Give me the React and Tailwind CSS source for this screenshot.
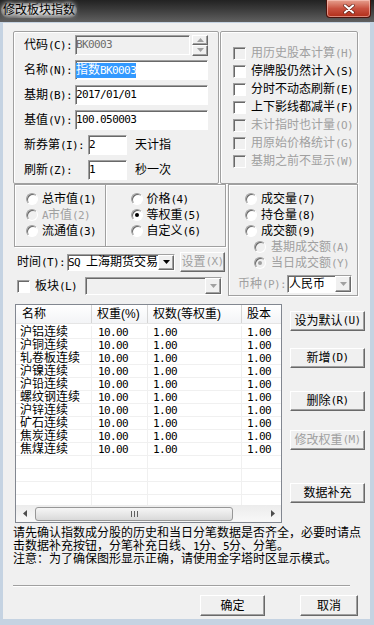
import React from 'react'

const sunken = 'border border-t-[#a0a0a0] border-l-[#a0a0a0] border-b-white border-r-white shadow-[inset_1px_1px_0_#696969]'
const raised = 'border border-t-white border-l-white border-b-[#696969] border-r-[#696969] shadow-[inset_-1px_-1px_0_#a0a0a0] bg-[#f0f0f0]'
const etched = 'border border-[#a0a0a0] shadow-[inset_1px_1px_0_#fff,1px_1px_0_#fff]'
const mono = "[font-family:'DejaVu_Sans_Mono',monospace] text-[11px] tracking-[-0.6px]"
const grey = 'text-[#a0a0a0]'

const rows = ['沪铝连续', '沪铜连续', '轧卷板连续', '沪镍连续', '沪铅连续', '螺纹钢连续', '沪锌连续', '矿石连续', '焦炭连续', '焦煤连续']

// ascii runs get the narrow fixed-width face, like the old dialog font
function T({ s }) {
  const parts = s.split(/([\x20-\x7e]+)/).filter(Boolean)
  return parts.map((p, i) =>
    /^[\x20-\x7e]+$/.test(p) ? <span key={i} className={`${mono} whitespace-pre`}>{p}</span> : <span key={i}>{p}</span>
  )
}

function Check({ label, disabled }) {
  return (
    <div className="flex items-center h-[18px]">
      <span className={`w-[13px] h-[13px] shrink-0 ${sunken} ${disabled ? 'bg-[#f0f0f0]' : 'bg-white'}`} />
      <span className={`ml-[5px] whitespace-nowrap ${disabled ? grey : ''}`}><T s={label} /></span>
    </div>
  )
}

function Radio({ label, checked, disabled, gap = 'ml-[4px]' }) {
  return (
    <div className="flex items-center h-[16px]">
      <span className={`flex items-center justify-center w-[12px] h-[12px] shrink-0 rounded-full ${sunken} ${disabled ? 'bg-[#f0f0f0]' : 'bg-white'}`}>
        {checked && <span className={`w-[4px] h-[4px] rounded-full ${disabled ? 'bg-[#a0a0a0]' : 'bg-black'}`} />}
      </span>
      <span className={`${gap} whitespace-nowrap ${disabled ? grey : ''}`}><T s={label} /></span>
    </div>
  )
}

function Arrow({ color = '#000', down = true }) {
  return (
    <svg width="7" height="4" viewBox="0 0 7 4">
      <path d={down ? 'M0 0H7L3.5 4Z' : 'M0 4H7L3.5 0Z'} fill={color} />
    </svg>
  )
}

function Btn({ label, className = '', disabled }) {
  return (
    <div className={`h-[20px] flex items-center justify-center whitespace-nowrap ${raised} ${disabled ? grey : ''} ${className}`}>
      <T s={label} />
    </div>
  )
}

function Field({ label, labelW = 'w-[51px]', children, className = '' }) {
  return (
    <div className="flex items-center h-[20px]">
      <span className={`${labelW} shrink-0 whitespace-nowrap`}><T s={label} /></span>
      <div className={`h-[20px] flex items-center ${sunken} ${className}`}>{children}</div>
    </div>
  )
}

export default function App() {
  return (
    <div className="w-[374px] h-[625px] flex flex-col overflow-hidden text-[12px] leading-[14px] text-black bg-[#3a3a3a] [font-family:'Liberation_Sans','Noto_Sans_CJK_SC',sans-serif]">
      <div className="h-[22px] shrink-0 flex items-start justify-between bg-linear-to-b from-[#222] to-[#606060]">
        <div className="mt-[3px] ml-[1px] px-[2px] h-[15px] leading-[15px] rounded-full bg-[radial-gradient(ellipse_at_center,rgba(235,235,235,0.85),rgba(200,200,200,0.35)_70%,rgba(0,0,0,0))] [text-shadow:0_0_4px_#fff,0_0_6px_#fff]">
          修改板块指数
        </div>
        <div className="mr-[3px] w-[45px] h-[18px] rounded-b-[4px] border border-t-0 border-[#4a120b] bg-linear-to-b from-[#e6a08f] via-[#c95240] to-[#b02c17] shadow-[inset_0_0_0_1px_rgba(255,210,200,0.55)] flex items-center justify-center">
          <svg width="12" height="10" viewBox="0 0 12 10">
            <path d="M2 1.5L10 8.5M10 1.5L2 8.5" stroke="#5a1a10" strokeWidth="3.4" strokeLinecap="round" />
            <path d="M2 1.5L10 8.5M10 1.5L2 8.5" stroke="#fff" strokeWidth="2.2" strokeLinecap="round" />
          </svg>
        </div>
      </div>

      <div className="flex-1 flex flex-col bg-[#c5d3e2] pt-[1px] pl-[3px] pr-[4px] pb-[6px]">
        <div className="flex-1 flex flex-col bg-[#f0f0f0]">
          {/* top groups */}
          <div className="mt-[8px] flex h-[153px] shrink-0">
            <div className={`ml-[10px] w-[206px] h-full rounded-[2px] ${etched} flex flex-col gap-[5px] pt-[3px] pl-[10px]`}>
              <div className="flex items-center h-[20px]">
                <span className="w-[51px] shrink-0 whitespace-nowrap"><T s="代码(C):" /></span>
                <div className={`w-[115px] h-[20px] flex items-center bg-[#f0f0f0] text-[#6d6d6d] ${sunken}`}>
                  <span className={mono}>BK0003</span>
                </div>
                <div className="ml-[2px] w-[16px] h-[21px] flex flex-col">
                  <div className={`flex-1 flex items-center justify-center ${raised}`}><Arrow color="#a0a0a0" down={false} /></div>
                  <div className={`flex-1 flex items-center justify-center ${raised}`}><Arrow color="#a0a0a0" /></div>
                </div>
              </div>
              <Field label="名称(N):" className="w-[133px] bg-white">
                <span className="bg-[#3399ff] text-white leading-[14px]">指数<span className={mono}>BK0003</span></span>
              </Field>
              <Field label="基期(B):" className="w-[133px] bg-white">
                <span className={mono}>2017/01/01</span>
              </Field>
              <Field label="基值(V):" className="w-[133px] bg-white">
                <span className={mono}>100.050003</span>
              </Field>
              <div className="flex items-center h-[20px]">
                <Field label="新券第(I):" labelW="w-[64px]" className="w-[39px] bg-white">
                  <span className={mono}>2</span>
                </Field>
                <span className="ml-[8px]">天计指</span>
              </div>
              <div className="flex items-center h-[20px]">
                <Field label="刷新(Z):" labelW="w-[64px]" className="w-[39px] bg-white">
                  <span className={mono}>1</span>
                </Field>
                <span className="ml-[8px]">秒一次</span>
              </div>
            </div>
            <div className={`ml-[1px] w-[138px] h-full rounded-[2px] ${etched} flex flex-col pt-[12px] pl-[12px]`}>
              <Check label="用历史股本计算(H)" disabled />
              <Check label="停牌股仍然计入(S)" />
              <Check label="分时不动态刷新(E)" />
              <Check label="上下影线都减半(F)" />
              <Check label="未计指时也计量(O)" disabled />
              <Check label="用原始价格统计(G)" disabled />
              <Check label="基期之前不显示(W)" disabled />
            </div>
          </div>

          {/* radio groups */}
          <div className="flex h-[112px] shrink-0">
            <div className="ml-[11px] w-[212px] flex flex-col">
              <div className="flex h-[63px]">
                <div className={`w-[92px] h-full ${etched} flex flex-col pt-[6px] pl-[11px]`}>
                  <Radio label="总市值(1)" />
                  <Radio label="A市值(2)" disabled />
                  <Radio label="流通值(3)" />
                </div>
                <div className={`-ml-px w-[122px] h-full ${etched} flex flex-col pt-[6px] pl-[25px]`}>
                  <Radio label="价格(4)" />
                  <Radio label="等权重(5)" checked />
                  <Radio label="自定义(6)" />
                </div>
              </div>
              <div className="mt-[6px] h-[18px] flex items-center">
                <span className="ml-[3px] w-[50px] shrink-0 whitespace-nowrap"><T s="时间(T):" /></span>
                <div className={`w-[108px] h-[17px] flex items-center bg-white ${sunken}`}>
                  <span className="flex-1 whitespace-nowrap overflow-hidden"><T s="SQ 上海期货交易" /></span>
                  <span className={`w-[16px] h-full flex items-center justify-center ${raised}`}><Arrow /></span>
                </div>
                <Btn label="设置(X)" className="ml-[5px] w-[45px] h-[18px]" disabled />
              </div>
              <div className="mt-[6px] h-[18px] flex items-center">
                <span className={`ml-[3px] w-[13px] h-[13px] shrink-0 bg-white ${sunken}`} />
                <span className="ml-[5px] w-[50px] shrink-0 whitespace-nowrap"><T s="板块(L)" /></span>
                <div className={`w-[137px] h-[18px] flex items-center justify-end bg-[#f0f0f0] ${sunken}`}>
                  <span className={`w-[16px] h-full flex items-center justify-center ${raised}`}><Arrow color="#a0a0a0" /></span>
                </div>
              </div>
            </div>
            <div className={`ml-[2px] w-[130px] h-full ${etched} flex flex-col pt-[6px]`}>
              <div className="pl-[16px] flex flex-col">
                <Radio label="成交量(7)" />
                <Radio label="持仓量(8)" />
                <Radio label="成交额(9)" />
              </div>
              <div className="pl-[25px] flex flex-col">
                <Radio label="基期成交额(A)" disabled gap="ml-[5px]" />
                <Radio label="当日成交额(Y)" disabled checked gap="ml-[5px]" />
              </div>
              <div className="mt-[4px] pl-[9px] h-[18px] flex items-center">
                <span className={`w-[49px] shrink-0 whitespace-nowrap ${grey}`}><T s="币种(P):" /></span>
                <div className={`w-[65px] h-[18px] flex items-center bg-white ${sunken}`}>
                  <span className="flex-1 pl-[1px] whitespace-nowrap">人民币</span>
                  <span className={`w-[16px] h-full flex items-center justify-center ${raised}`}><Arrow color="#a0a0a0" /></span>
                </div>
              </div>
            </div>
          </div>

          {/* list and side buttons */}
          <div className="mt-[8px] flex h-[219px] shrink-0">
            <div className="ml-[12px] w-[267px] h-full border border-[#828790] bg-white flex flex-col overflow-hidden">
              <div className="h-[19px] shrink-0 flex bg-linear-to-b from-white to-[#f3f4f6] border-b border-[#e5e5e5]">
                <div className="w-[76px] shrink-0 pl-[6px] flex items-center border-r border-[#d5d5d5]">名称</div>
                <div className="w-[56px] shrink-0 pl-[5px] flex items-center border-r border-[#d5d5d5]">权重(%)</div>
                <div className="w-[94px] shrink-0 pl-[5px] flex items-center border-r border-[#d5d5d5] whitespace-nowrap">权数(等权重)</div>
                <div className="w-[60px] shrink-0 pl-[5px] flex items-center">股本</div>
              </div>
              <div className="flex-1 overflow-hidden pt-[2px]">
                {[...rows, '', '', '', '', ''].map((n, i) => (
                  <div key={i} className="h-[13px] flex border-b border-[#f0f0f0] leading-[12px]">
                    <div className="w-[76px] shrink-0 pl-[4px] border-r border-[#f0f0f0] whitespace-nowrap">{n}</div>
                    <div className="w-[56px] shrink-0 pl-[6px] border-r border-[#f0f0f0]"><span className={mono}>{n ? '10.00' : ''}</span></div>
                    <div className="w-[94px] shrink-0 pl-[5px] border-r border-[#f0f0f0]"><span className={mono}>{n ? '1.00' : ''}</span></div>
                    <div className="w-[60px] shrink-0 pl-[5px]"><span className={mono}>{n ? '1.00' : ''}</span></div>
                  </div>
                ))}
              </div>
              <div className="h-[17px] shrink-0 flex items-center bg-linear-to-b from-[#ececec] to-[#f8f8f8]">
                <div className="w-[17px] h-full flex items-center justify-center">
                  <svg width="4" height="7" viewBox="0 0 4 7"><path d="M4 0L0 3.5L4 7Z" fill="#4d4d4d" /></svg>
                </div>
                <div className="ml-[2px] w-[198px] h-[14px] rounded-[3px] border border-[#979797] bg-linear-to-b from-[#f6f6f6] to-[#d9d9d9] flex items-center justify-center gap-[2px]">
                  <span className="w-px h-[6px] bg-[#606060]" />
                  <span className="w-px h-[6px] bg-[#606060]" />
                  <span className="w-px h-[6px] bg-[#606060]" />
                </div>
                <div className="flex-1" />
                <div className="w-[17px] h-full flex items-center justify-center">
                  <svg width="4" height="7" viewBox="0 0 4 7"><path d="M0 0L4 3.5L0 7Z" fill="#4d4d4d" /></svg>
                </div>
              </div>
            </div>
            <div className="ml-[8px] w-[75px] flex flex-col">
              <Btn label="设为默认(U)" className="mt-[7px]" />
              <Btn label="新增(D)" className="mt-[17px]" />
              <Btn label="删除(R)" className="mt-[23px]" />
              <Btn label="修改权重(M)" className="mt-[19px]" disabled />
              <Btn label="数据补充" className="mt-[33px]" />
            </div>
          </div>

          {/* notes */}
          <div className="mt-[4px] ml-[10px] flex flex-col leading-[13px] whitespace-nowrap">
            <div>请先确认指数成分股的历史和当日分笔数据是否齐全，必要时请点</div>
            <div><T s="击数据补充按钮，分笔补充日线、1分、5分、分笔。" /></div>
            <div>注意：为了确保图形显示正确，请使用金字塔时区显示模式。</div>
          </div>
          <div className="mt-[19px] ml-[10px] w-[337px] h-[2px] border-t border-t-[#a0a0a0] border-b border-b-white" />
          <div className="mt-[8px] h-[21px] flex">
            <Btn label="确定" className="ml-[197px] w-[65px] h-[21px]" />
            <Btn label="取消" className="ml-[35px] w-[58px] h-[21px]" />
          </div>
        </div>
      </div>
    </div>
  )
}
